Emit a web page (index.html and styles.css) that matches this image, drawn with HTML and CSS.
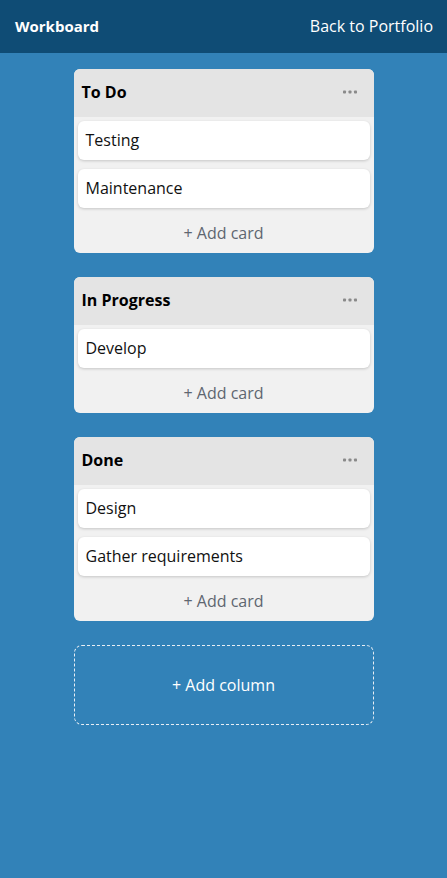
FILE: index.html
```html
<!DOCTYPE html>
<html>
<head>
<meta charset="utf-8">
<link rel="stylesheet" href="styles.css">
</head>
<body>
<header class="topbar">
  <span class="brand">Workboard</span>
  <a class="back">Back to Portfolio</a>
</header>
<main class="board">
  <section class="column">
    <div class="col-head"><h2>To Do</h2><svg class="dots" width="14" height="4" viewBox="0 0 14 4"><rect x="0" y="0.5" width="3" height="3" rx="0.8"/><rect x="5.5" y="0.5" width="3" height="3" rx="0.8"/><rect x="11" y="0.5" width="3" height="3" rx="0.8"/></svg></div>
    <div class="cards">
      <div class="card">Testing</div>
      <div class="card">Maintenance</div>
    </div>
    <div class="add-card">+ Add card</div>
  </section>
  <section class="column">
    <div class="col-head"><h2>In Progress</h2><svg class="dots" width="14" height="4" viewBox="0 0 14 4"><rect x="0" y="0.5" width="3" height="3" rx="0.8"/><rect x="5.5" y="0.5" width="3" height="3" rx="0.8"/><rect x="11" y="0.5" width="3" height="3" rx="0.8"/></svg></div>
    <div class="cards">
      <div class="card">Develop</div>
    </div>
    <div class="add-card">+ Add card</div>
  </section>
  <section class="column">
    <div class="col-head"><h2>Done</h2><svg class="dots" width="14" height="4" viewBox="0 0 14 4"><rect x="0" y="0.5" width="3" height="3" rx="0.8"/><rect x="5.5" y="0.5" width="3" height="3" rx="0.8"/><rect x="11" y="0.5" width="3" height="3" rx="0.8"/></svg></div>
    <div class="cards">
      <div class="card">Design</div>
      <div class="card">Gather requirements</div>
    </div>
    <div class="add-card">+ Add card</div>
  </section>
  <div class="add-column">+ Add column</div>
</main>
</body>
</html>
```
FILE: styles.css
```css
* { box-sizing: border-box; }
html, body { margin: 0; padding: 0; }
body {
  background: #3282b8;
  font-family: "Open Sans", "Noto Sans", sans-serif;
  min-height: 878px;
}
.topbar {
  height: 53px;
  background: #0f4c75;
  display: flex;
  align-items: center;
  justify-content: space-between;
  padding: 0 14px 2px 15px;
  color: #fff;
}
.brand { font-weight: 700; font-size: 15px; }
.back { font-size: 16px; color: #fff; }
.board {
  display: flex;
  flex-direction: column;
  align-items: center;
  padding-top: 16px;
  gap: 24px;
}
.column {
  width: 300px;
  background: #f1f1f1;
  border-radius: 6px;
  overflow: hidden;
}
.col-head {
  height: 48px;
  background: #e4e4e4;
  display: flex;
  align-items: center;
  justify-content: space-between;
  padding: 0 17px 2px 8px;
}
.col-head h2 {
  margin: 0;
  font-size: 16px;
  font-weight: 700;
  color: #000;
}
.dots { fill: #8a8a8a; display: block; }
.cards {
  display: flex;
  flex-direction: column;
  gap: 9px;
  padding: 4px 4px 0;
}
.card {
  background: #fff;
  border-radius: 6px;
  height: 39px;
  display: flex;
  align-items: center;
  padding: 0 8px 2px;
  font-size: 16px;
  color: #111;
  box-shadow: 0 1px 3px rgba(0,0,0,0.18);
}
.add-card {
  height: 45px;
  display: flex;
  align-items: center;
  justify-content: center;
  padding-top: 4px;
  font-size: 16px;
  color: #5e6670;
}
.add-column {
  width: 300px;
  height: 80px;
  border: 1px dashed #e8eef4;
  border-radius: 8px;
  display: flex;
  align-items: center;
  justify-content: center;
  color: #fff;
  font-size: 16px;
}
```
